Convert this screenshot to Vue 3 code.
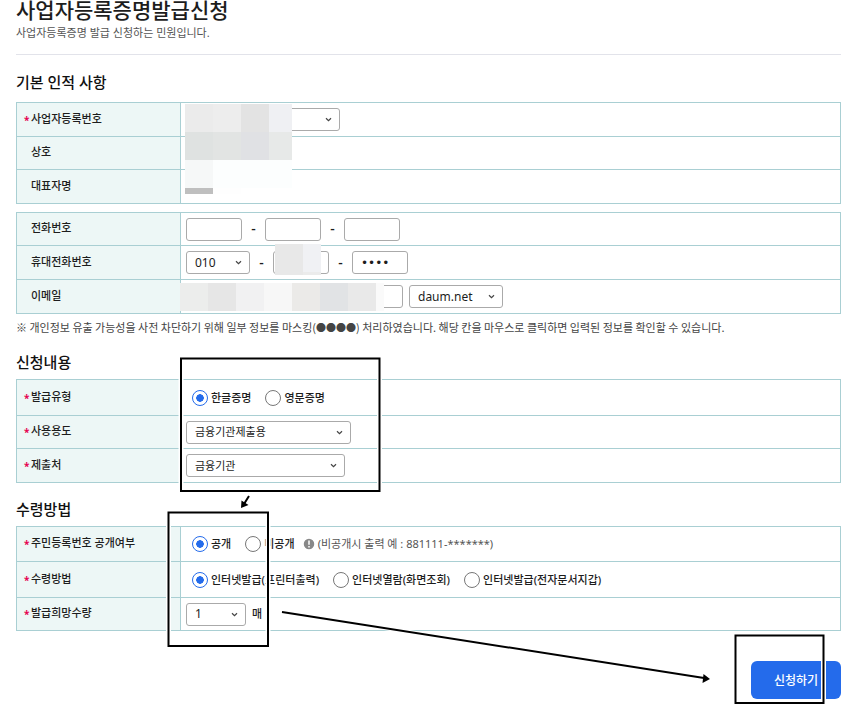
<script setup>
import { ref } from 'vue'

const issueType = ref('ko')
const disclosure = ref('open')
const method = ref('print')

const chevron = 'M1 1.2 L3.5 3.6 L6 1.2'

const mosaics = [
  [185, 104, 28, 28, '#ebebeb'], [213, 104, 28, 28, '#ededed'], [241, 104, 28, 28, '#e3e3e3'], [269, 104, 23, 28, '#eff0f3'],
  [185, 132, 28, 28, '#dfe2e1'], [213, 132, 28, 28, '#e2e4e3'], [241, 132, 28, 28, '#e0e1e4'], [269, 132, 23, 28, '#e7e9e8'],
  [185, 160, 28, 28, '#f6f8f8'], [213, 160, 79, 28, '#fcfefe'], [185, 188, 28, 6, '#bfbfbf'], [213, 188, 28, 6, '#fefefe'],
  [275, 244, 28, 31, '#e8e8e8'], [303, 244, 18, 28, '#f0f1f4'], [303, 272, 18, 3, '#ebebeb'],
  [180, 283, 28, 28, '#ecedec'], [208, 283, 28, 28, '#e6e6e6'], [236, 283, 28, 28, '#f1f1f2'], [264, 283, 28, 28, '#f7f7f7'],
  [292, 283, 28, 28, '#ebeae8'], [320, 283, 28, 28, '#e1e3e5'], [348, 283, 28, 28, '#e9e9e9'], [376, 283, 8, 28, '#fafafa']
]

const frames = [
  [181, 358.5, 198.5, 132.5],
  [168.5, 512.5, 99.5, 133.5],
  [735.5, 635.5, 88, 67.5]
]
</script>

<template>
  <main class="page">
    <header class="head">
      <h1>사업자등록증명발급신청</h1>
      <p>사업자등록증명 발급 신청하는 민원입니다.</p>
    </header>

    <section>
      <h2 class="first">기본 인적 사항</h2>
      <table>
        <tbody>
          <tr class="r34">
            <th scope="row"><i>*</i><label for="biz">사업자등록번호</label></th>
            <td><div class="line"><span class="select w154"><select id="biz"><option></option></select><svg viewBox="0 0 7 5"><path :d="chevron" /></svg></span></div></td>
          </tr>
          <tr class="r33"><th scope="row"><i></i>상호</th><td></td></tr>
          <tr class="r34"><th scope="row"><i></i>대표자명</th><td></td></tr>
        </tbody>
      </table>
      <table class="next">
        <tbody>
          <tr class="r33">
            <th scope="row"><i></i>전화번호</th>
            <td><div class="line">
              <input class="num" type="text" aria-label="전화번호 앞자리"><span class="dash">-</span>
              <input class="num" type="text" aria-label="전화번호 가운데"><span class="dash">-</span>
              <input class="num" type="text" aria-label="전화번호 뒷자리">
            </div></td>
          </tr>
          <tr class="r34">
            <th scope="row"><i></i>휴대전화번호</th>
            <td><div class="line">
              <span class="select w64"><select aria-label="휴대전화 앞자리"><option>010</option></select><svg viewBox="0 0 7 5"><path :d="chevron" /></svg></span><span class="dash">-</span>
              <input class="num" type="text" aria-label="휴대전화 가운데"><span class="dash">-</span>
              <input class="num" type="password" value="0000" aria-label="휴대전화 뒷자리">
            </div></td>
          </tr>
          <tr class="r34">
            <th scope="row"><i></i><label for="mail">이메일</label></th>
            <td><div class="line mail">
              <input id="mail" class="w217" type="text">
              <span class="select w94"><select aria-label="이메일 도메인"><option>daum.net</option></select><svg viewBox="0 0 7 5"><path :d="chevron" /></svg></span>
            </div></td>
          </tr>
        </tbody>
      </table>
      <p class="note">※ 개인정보 유출 가능성을 사전 차단하기 위해 일부 정보를 마스킹(<span class="dots">●●●●</span>) 처리하였습니다. 해당 칸을 마우스로 클릭하면 입력된 정보를 확인할 수 있습니다.</p>
    </section>

    <section>
      <h2>신청내용</h2>
      <table>
        <tbody>
          <tr class="r36">
            <th scope="row"><i>*</i>발급유형</th>
            <td><div class="line radios">
              <label><input v-model="issueType" type="radio" name="type" value="ko">한글증명</label>
              <label><input v-model="issueType" type="radio" name="type" value="en">영문증명</label>
            </div></td>
          </tr>
          <tr class="r33">
            <th scope="row"><i>*</i><label for="use">사용용도</label></th>
            <td><div class="line"><span class="select w165"><select id="use"><option>금융기관제출용</option></select><svg viewBox="0 0 7 5"><path :d="chevron" /></svg></span></div></td>
          </tr>
          <tr class="r34">
            <th scope="row"><i>*</i><label for="dest">제출처</label></th>
            <td><div class="line"><span class="select w159"><select id="dest"><option>금융기관</option></select><svg viewBox="0 0 7 5"><path :d="chevron" /></svg></span></div></td>
          </tr>
        </tbody>
      </table>
    </section>

    <section>
      <h2>수령방법</h2>
      <table>
        <tbody>
          <tr class="r35">
            <th scope="row"><i>*</i>주민등록번호 공개여부</th>
            <td><div class="line radios">
              <label><input v-model="disclosure" type="radio" name="open" value="open">공개</label>
              <label><input v-model="disclosure" type="radio" name="open" value="closed">비공개</label>
              <span class="hint">
                <svg viewBox="0 0 12 12"><circle cx="6" cy="6" r="6" /><path d="M6 2.5V6.8M6 8v1.6" /></svg>
                (비공개시 출력 예 : 881111-*******)
              </span>
            </div></td>
          </tr>
          <tr class="r36">
            <th scope="row"><i>*</i>수령방법</th>
            <td><div class="line radios">
              <label><input v-model="method" type="radio" name="method" value="print">인터넷발급(프린터출력)</label>
              <label><input v-model="method" type="radio" name="method" value="view">인터넷열람(화면조회)</label>
              <label><input v-model="method" type="radio" name="method" value="wallet">인터넷발급(전자문서지갑)</label>
            </div></td>
          </tr>
          <tr class="r33">
            <th scope="row"><i>*</i><label for="qty">발급희망수량</label></th>
            <td><div class="line mail"><span class="select w60"><select id="qty"><option>1</option></select><svg viewBox="0 0 7 5"><path :d="chevron" /></svg></span><span>매</span></div></td>
          </tr>
        </tbody>
      </table>
    </section>

    <div class="actions"><button type="button">신청하기</button></div>

    <svg class="marks" width="846" height="706" aria-hidden="true">
      <rect v-for="(m, n) in mosaics" :key="'m' + n" :x="m[0]" :y="m[1]" :width="m[2]" :height="m[3]" :fill="m[4]" shape-rendering="crispEdges" />
      <g fill="none">
        <g v-for="(f, n) in frames" :key="'f' + n">
          <rect :x="f[0]" :y="f[1]" :width="f[2]" :height="f[3]" stroke="#fff" stroke-width="5" />
          <rect :x="f[0]" :y="f[1]" :width="f[2]" :height="f[3]" stroke="#000" stroke-width="2" />
        </g>
        <path d="M282 612L704 678M249 496L244 504" stroke="#fff" stroke-width="4" />
        <path d="M282 612L704 678M249 496L244 504" stroke="#000" stroke-width="2" />
      </g>
      <path d="M710 679L702.500 683L703.500 674ZM241 508L241.500 500.500L248.500 505Z" fill="#000" />
    </svg>
  </main>
</template>

<style>
body {
  margin: 0;
  background: #fff;
}
</style>

<style scoped>
* {
  box-sizing: border-box;
}
.page {
  position: relative;
  padding: 0 5px 6px 16px;
  font: 500 11px/16px "Noto Sans", "Noto Sans CJK KR", sans-serif;
  color: #1d1d1d;
}
h1,
h2,
p {
  margin: 0;
}
.head {
  height: 55px;
  border-bottom: 1px solid #e2e3ea;
}
h1 {
  font-family: "Noto Sans CJK KR", sans-serif;
  font-size: 21px;
  font-weight: 500;
  line-height: 18px;
}
.head p {
  margin-top: 6px;
  font-weight: 400;
  line-height: 18px;
  color: #555;
}
h2 {
  padding: 14px 0 5px;
  font-size: 15px;
  font-weight: 500;
  line-height: 24px;
  color: #111;
}
h2.first {
  padding-top: 15px;
  padding-bottom: 8px;
}
table {
  width: 100%;
  border-collapse: collapse;
  table-layout: fixed;
}
.next {
  margin-top: 8px;
}
th,
td {
  padding: 0;
  border: 1px solid #a9cfd3;
}
th {
  width: 164px;
  padding-bottom: 2px;
  padding-left: 7px;
  background: #edf7f6;
  font-weight: 500;
  text-align: left;
}
th i {
  display: inline-block;
  width: 7px;
  font-size: 10px;
  font-style: normal;
  font-weight: 700;
  line-height: 8px;
  vertical-align: -1px;
  color: #e5004f;
}
td {
  padding-left: 5px;
}
.r33 { height: 33px; }
.r34 { height: 34px; }
.r35 { height: 35px; }
.r36 { height: 36px; }
.line {
  display: flex;
  align-items: center;
}
.mail {
  gap: 6px;
}
.dash {
  width: 23px;
  font-size: 14px;
  text-align: center;
}
input,
select {
  height: 23px;
  margin: 0;
  padding: 0 8px;
  border: 1px solid #aaa;
  border-radius: 3px;
  background: #fff;
  color: #1d1d1d;
  font: 400 12px/16px "Noto Sans", "Noto Sans CJK KR", sans-serif;
}
input[type="password"] {
  font-family: "DejaVu Sans", sans-serif;
}
.num {
  width: 56px;
}
.select {
  position: relative;
  display: block;
}
select {
  display: block;
  width: 100%;
  appearance: none;
}
#use,
#dest {
  font-size: 11px;
}
.select svg {
  position: absolute;
  top: 9px;
  right: 8px;
  width: 7px;
  height: 5px;
  fill: none;
  stroke: #444;
  stroke-width: 1.2;
  pointer-events: none;
}
.w60 { width: 60px; }
.w64 { width: 64px; }
.w94 { width: 94px; }
.w154 { width: 154px; }
.w159 { width: 159px; }
.w165 { width: 165px; }
.w217 { width: 217px; }
.note {
  padding-top: 5px;
  font-family: "Noto Sans CJK KR", sans-serif;
  font-weight: 400;
  color: #444;
}
.dots {
  font-size: 10px;
}
.radios {
  gap: 14px;
  padding-left: 6px;
}
.radios label {
  display: flex;
  align-items: center;
  gap: 3px;
}
.radios input {
  width: 16px;
  height: 16px;
  padding: 0;
  border: 1px solid #777;
  border-radius: 50%;
  appearance: none;
}
.radios input:checked {
  border-color: #246beb;
  background: radial-gradient(circle, #246beb 0 3.5px, #fff 4px);
}
.hint {
  display: flex;
  align-items: center;
  gap: 3px;
  margin-left: -6px;
  font-weight: 400;
  color: #555;
}
.hint svg {
  width: 12px;
  height: 12px;
  fill: #888;
  stroke: #fff;
  stroke-width: 1.5;
}
.actions {
  display: flex;
  justify-content: flex-end;
  padding-top: 30px;
}
button {
  width: 90px;
  height: 38px;
  padding: 0;
  border: 0;
  border-radius: 6px;
  background: #246beb;
  color: #fff;
  font: 500 12px/16px "Noto Sans CJK KR", sans-serif;
}
.marks {
  position: absolute;
  top: 0;
  left: 0;
  pointer-events: none;
}
</style>
